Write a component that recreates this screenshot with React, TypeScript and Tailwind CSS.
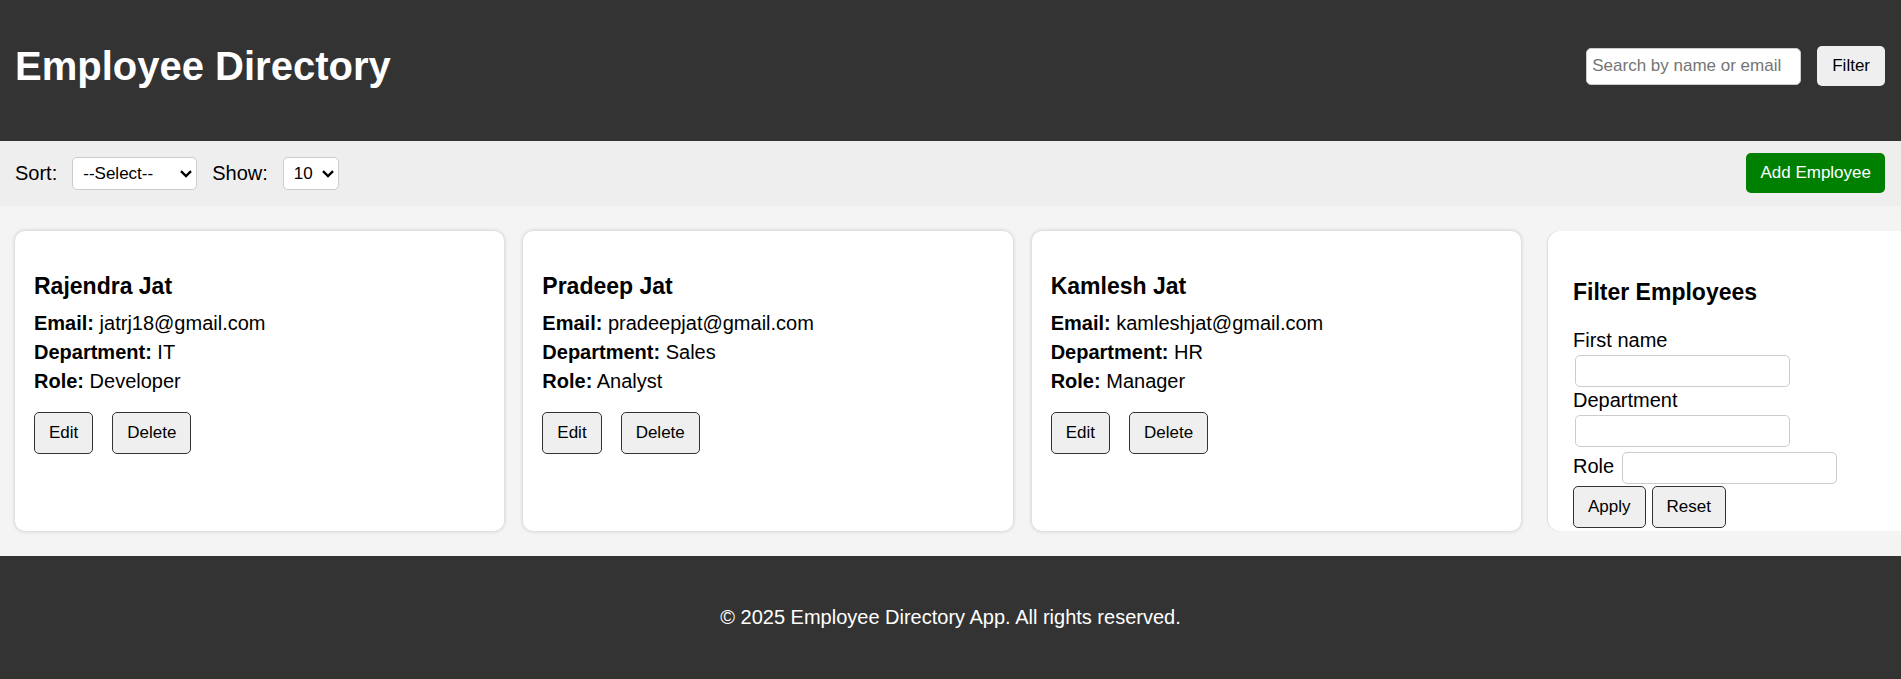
import React from "react";

type Employee = {
  name: string;
  email: string;
  department: string;
  role: string;
};

const employees: Employee[] = [
  { name: "Rajendra Jat", email: "jatrj18@gmail.com", department: "IT", role: "Developer" },
  { name: "Pradeep Jat", email: "pradeepjat@gmail.com", department: "Sales", role: "Analyst" },
  { name: "Kamlesh Jat", email: "kamleshjat@gmail.com", department: "HR", role: "Manager" },
];

function OutlineButton({ children }: { children: React.ReactNode }) {
  return (
    <button
      type="button"
      className="h-[42px] rounded-[5px] border border-[#333] bg-[#efefef] px-[14px] pb-0.5 text-[17px]"
    >
      {children}
    </button>
  );
}

function Dropdown({ id, options, width }: { id: string; options: string[]; width: string }) {
  return (
    <div className={`relative ${width}`}>
      <select
        id={id}
        className="block h-[33px] w-full appearance-none rounded-[5px] border border-[#ccc] bg-white pl-[10px] text-[17px]"
      >
        {options.map((option) => (
          <option key={option}>{option}</option>
        ))}
      </select>
      <svg
        className="pointer-events-none absolute top-[13px] right-[5px] h-2 w-3"
        viewBox="0 0 12 8"
        fill="none"
        stroke="black"
        strokeWidth="2.4"
        aria-hidden="true"
      >
        <path d="M1 1.2 L6 6 L11 1.2" />
      </svg>
    </div>
  );
}

function Field({ id, label, inline = false }: { id: string; label: string; inline?: boolean }) {
  return (
    <div className={inline ? "flex items-center gap-2" : "flex flex-col items-start"}>
      <label htmlFor={id} className={inline ? "pb-1" : "h-7 leading-[26px]"}>
        {label}
      </label>
      <input
        id={id}
        type="text"
        className={
          inline
            ? "h-8 w-[215px] rounded-[5px] border border-[#ccc] bg-white px-1.5 text-[17px]"
            : "ml-0.5 h-8 w-[215px] rounded-[5px] border border-[#ccc] bg-white px-1.5 text-[17px]"
        }
      />
    </div>
  );
}

function EmployeeCard({ employee }: { employee: Employee }) {
  return (
    <article className="rounded-[10px] bg-white px-[19px] pt-10 shadow-[0_0_4px_rgba(0,0,0,0.2)]">
      <h3 className="text-[23px] leading-[30px] font-bold">{employee.name}</h3>
      <div className="mt-2 leading-[29px]">
        <p>
          <strong>Email:</strong> {employee.email}
        </p>
        <p>
          <strong>Department:</strong> {employee.department}
        </p>
        <p>
          <strong>Role:</strong> {employee.role}
        </p>
      </div>
      <div className="mt-4 flex gap-[19px]">
        <OutlineButton>Edit</OutlineButton>
        <OutlineButton>Delete</OutlineButton>
      </div>
    </article>
  );
}

export default function App() {
  return (
    <div className="flex min-h-screen flex-col bg-[#f4f4f4] font-['Liberation_Sans',Arial,sans-serif] text-[20px] leading-[23px] text-black">
      <header className="flex items-center justify-between bg-[#333] pt-[43px] pr-4 pb-[52px] pl-[15px] text-white">
        <h1 className="text-[40px] leading-[46px] font-bold">Employee Directory</h1>
        <div className="flex items-center gap-4">
          <input
            type="text"
            aria-label="Search employees"
            placeholder="Search by name or email"
            className="h-[37px] w-[215px] rounded-[5px] border border-[#ccc] bg-white px-[5px] text-[17px] text-black placeholder:text-[#757575]"
          />
          <button
            type="button"
            className="h-10 rounded-[5px] bg-[#efefef] px-[15px] pb-0.5 text-[17px] text-black"
          >
            Filter
          </button>
        </div>
      </header>

      <div className="flex items-center justify-between bg-[#eee] pt-3 pr-4 pb-[13px] pl-[15px]">
        <div className="flex items-center gap-[15px]">
          <label htmlFor="sort">Sort:</label>
          <Dropdown id="sort" width="w-[125px]" options={["--Select--", "First Name", "Department"]} />
          <label htmlFor="show">Show:</label>
          <Dropdown id="show" width="w-14" options={["10", "25", "50"]} />
        </div>
        <button
          type="button"
          className="h-10 rounded-[5px] bg-[#008000] px-[14px] pb-0.5 text-[17px] text-white"
        >
          Add Employee
        </button>
      </div>

      <main className="flex gap-[27px] py-[25px] pl-[15px]">
        <section className="grid flex-1 grid-cols-3 gap-[19px]">
          {employees.map((employee) => (
            <EmployeeCard key={employee.email} employee={employee} />
          ))}
        </section>
        <aside className="w-[353px] rounded-l-[12px] bg-white px-[25px] pt-[46px] pb-[3px] shadow-[-1px_0_1px_rgba(0,0,0,0.1)]">
          <h3 className="text-[23px] leading-[30px] font-bold">Filter Employees</h3>
          <form className="mt-[20px]">
            <Field id="first-name" label="First name" />
            <Field id="department" label="Department" />
            <div className="mt-[5px] mb-0.5">
              <Field id="role" label="Role" inline />
            </div>
            <div className="flex gap-1.5">
              <OutlineButton>Apply</OutlineButton>
              <OutlineButton>Reset</OutlineButton>
            </div>
          </form>
        </aside>
      </main>

      <footer className="flex-1 bg-[#333] px-4 py-[50px] text-center text-white">
        <p>© 2025 Employee Directory App. All rights reserved.</p>
      </footer>
    </div>
  );
}
